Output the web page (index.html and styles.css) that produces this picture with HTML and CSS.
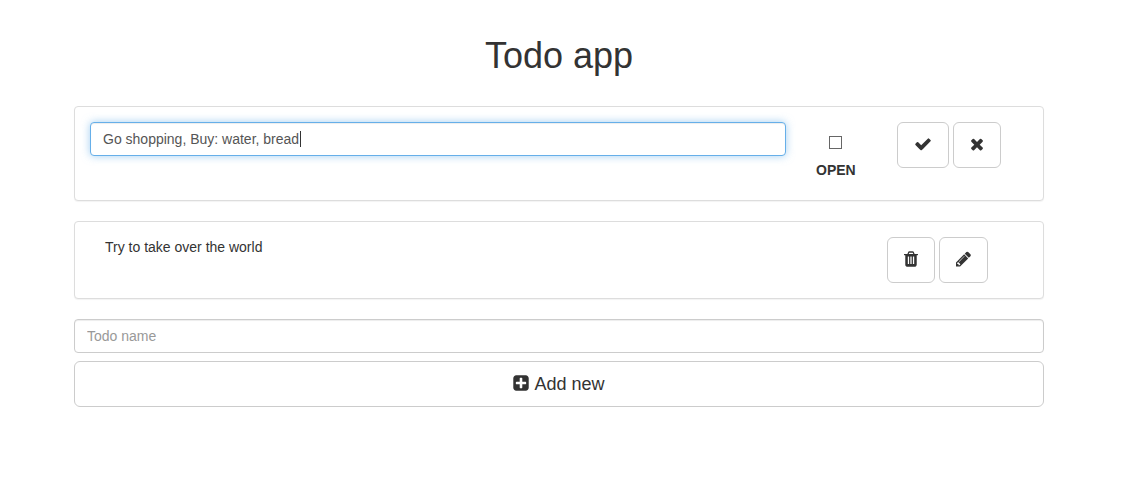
FILE: index.html
```
<!DOCTYPE html>
<html lang="en">
<head>
<meta charset="utf-8">
<meta name="viewport" content="width=device-width, initial-scale=1">
<title>Todo app</title>
<link rel="stylesheet" href="styles.css">
</head>
<body>
<main class="container">
  <h1 class="title">Todo app</h1>

  <section class="card editing">
    <div class="edit-name">
      <input class="field field-active" type="text" aria-label="Edit todo" value="Go shopping, Buy: water, bread">
      <span class="caret"></span>
    </div>
    <label class="status">
      <input class="status-box" type="checkbox">
      <span>OPEN</span>
    </label>
    <div class="actions">
      <button class="btn" type="button" aria-label="Save"><svg class="icon" width="18" height="18" viewBox="0 0 1792 1792"><path d="M1671 566q0 40-28 68l-724 724-136 136q-28 28-68 28t-68-28l-136-136-362-362q-28-28-28-68t28-68l136-136q28-28 68-28t68 28l294 295 656-657q28-28 68-28t68 28l136 136q28 28 28 68z"/></svg></button>
      <button class="btn" type="button" aria-label="Cancel"><svg class="icon" width="14" height="18" viewBox="192 0 1408 1792"><path d="M1490 1322q0 40-28 68l-136 136q-28 28-68 28t-68-28l-294-294-294 294q-28 28-68 28t-68-28l-136-136q-28-28-28-68t28-68l294-294-294-294q-28-28-28-68t28-68l136-136q28-28 68-28t68 28l294 294 294-294q28-28 68-28t68 28l136 136q28 28 28 68t-28 68l-294 294 294 294q28 28 28 68z"/></svg></button>
    </div>
  </section>

  <section class="card viewing">
    <div class="name">Try to take over the world</div>
    <div class="actions">
      <button class="btn" type="button" aria-label="Delete"><svg class="icon" width="14" height="18" viewBox="192 0 1408 1792"><path d="M704 1376v-704q0-14-9-23t-23-9h-64q-14 0-23 9t-9 23v704q0 14 9 23t23 9h64q14 0 23-9t9-23zm256 0v-704q0-14-9-23t-23-9h-64q-14 0-23 9t-9 23v704q0 14 9 23t23 9h64q14 0 23-9t9-23zm256 0v-704q0-14-9-23t-23-9h-64q-14 0-23 9t-9 23v704q0 14 9 23t23 9h64q14 0 23-9t9-23zm-544-992h448l-48-117q-7-9-17-11h-317q-10 2-17 11zm928 32v64q0 14-9 23t-23 9h-96v948q0 83-47 143.500t-113 60.500h-832q-66 0-113-58.500t-47-141.500v-952h-96q-14 0-23-9t-9-23v-64q0-14 9-23t23-9h309l70-167q15-37 54-63t79-26h320q40 0 79 26t54 63l70 167h309q14 0 23 9t9 23z"/></svg></button>
      <button class="btn" type="button" aria-label="Edit"><svg class="icon" width="15" height="18" viewBox="128 0 1536 1792"><path d="M491 1536l91-91-235-235-91 91v107h128v128h107zm523-928q0-22-22-22-10 0-17 7l-542 542q-7 7-7 17 0 22 22 22 10 0 17-7l542-542q7-7 7-17zm-54-192l416 416-832 832h-416v-416zm683 96q0 53-37 90l-166 166-416-416 166-165q36-38 90-38 53 0 91 38l235 234q37 39 37 91z"/></svg></button>
    </div>
  </section>

  <form class="new-todo">
    <input class="field" type="text" aria-label="Todo name" placeholder="Todo name">
    <button class="btn" type="button"><svg class="icon" width="16" height="18" viewBox="128 0 1536 1792"><path d="M1408 960v-128q0-26-19-45t-45-19h-320v-320q0-26-19-45t-45-19h-128q-26 0-45 19t-19 45v320h-320q-26 0-45 19t-19 45v128q0 26 19 45t45 19h320v320q0 26 19 45t45 19h128q26 0 45-19t19-45v-320h320q26 0 45-19t19-45zm256-544v960q0 119-84.500 203.500t-203.500 84.500h-960q-119 0-203.500-84.500t-84.500-203.500v-960q0-119 84.500-203.500t203.500-84.500h960q119 0 203.500 84.500t84.500 203.500z"/></svg><span>Add new</span></button>
  </form>
</main>
</body>
</html>
```
FILE: styles.css
```
* {
  box-sizing: border-box;
}

body {
  margin: 0;
  padding: 36px 12px 20px 0;
  background: #fff;
  color: #333;
  font: 14px/20px "Liberation Sans", Arial, sans-serif;
}

.container {
  max-width: 1000px;
  margin: 0 auto;
  padding: 0 15px;
}

.title {
  margin: 0 0 30px;
  font-size: 36px;
  font-weight: 500;
  line-height: 40px;
  text-align: center;
}

.card {
  display: grid;
  margin-bottom: 20px;
  padding: 15px 0;
  border: 1px solid #ddd;
  border-radius: 4px;
  background: #fff;
  box-shadow: 0 1px 1px rgba(0, 0, 0, 0.05);
}

.card > * {
  margin: 0 15px;
}

.editing {
  grid-template-columns: 9fr 1fr 2fr;
}

.viewing {
  grid-template-columns: 10fr 2fr;
  padding: 15px;
}

.edit-name {
  position: relative;
}

.field {
  display: block;
  width: 100%;
  height: 34px;
  padding: 6px 12px;
  border: 1px solid #ccc;
  border-radius: 4px;
  outline: 0;
  background: #fff;
  box-shadow: inset 0 1px 1px rgba(0, 0, 0, 0.075);
  color: #555;
  font: inherit;
}

.field::placeholder {
  color: #999;
  opacity: 1;
}

.field-active,
.field:focus {
  border-color: #66afe9;
  box-shadow: inset 0 1px 1px rgba(0, 0, 0, 0.075), 0 0 8px rgba(102, 175, 233, 0.6);
}

/* Insertion point at the end of the edited text */
.caret {
  position: absolute;
  top: 9px;
  left: 210px;
  width: 1px;
  height: 16px;
  background: #333;
}

.status {
  display: flex;
  flex-direction: column;
  align-items: center;
  justify-self: start;
  gap: 11px;
  padding: 14px 0 5px;
  font-weight: 700;
}

.status-box {
  appearance: none;
  width: 13px;
  height: 13px;
  margin: 0;
  border: 1px solid #666;
  background: #fff;
}

.status-box:checked {
  background: #333;
}

.actions {
  display: flex;
  align-items: flex-start;
  gap: 4px;
}

.btn {
  display: flex;
  align-items: center;
  justify-content: center;
  gap: 5px;
  min-height: 46px;
  padding: 10px 16px;
  border: 1px solid #ccc;
  border-radius: 6px;
  background: #fff;
  color: #333;
  font: 18px/24px "Liberation Sans", Arial, sans-serif;
  cursor: pointer;
}

.btn:hover {
  background: #e6e6e6;
}

.icon {
  flex: none;
  margin-bottom: 2px;
  fill: currentColor;
}

.new-todo {
  display: grid;
  gap: 8px;
}
```
